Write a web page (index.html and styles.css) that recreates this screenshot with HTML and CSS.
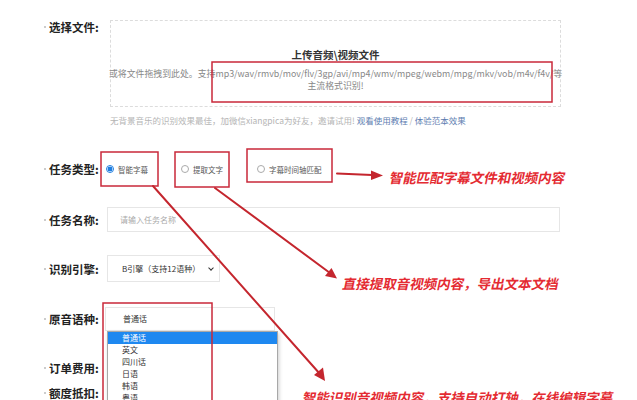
FILE: index.html
```html
<!DOCTYPE html>
<html lang="zh-CN">
  <head>
    <meta charset="utf-8">
    <title>上传音频视频文件</title>
    <link rel="stylesheet" href="styles.css">
  </head>
  <body>
    <div class="page">
      <div class="form">
        <div class="row row-file">
          <div class="label"><span class="dot"></span>选择文件:</div>
          <div class="field">
            <div class="upload">
              <div class="upload-title">上传音频\视频文件</div>
              <div class="upload-desc">或将文件拖拽到此处。支持mp3/wav/rmvb/mov/flv/3gp/avi/mp4/wmv/mpeg/webm/mpg/mkv/vob/m4v/f4v/等</div>
              <div class="upload-desc">主流格式识别!</div>
            </div>
            <div class="hint">无背景音乐的识别效果最佳，加微信xiangpica为好友，邀请试用! <a href="#">观看使用教程</a> / <a href="#">体验范本效果</a></div>
          </div>
        </div>

        <div class="row row-type">
          <div class="label"><span class="dot"></span>任务类型:</div>
          <div class="field radios">
            <label class="radio r1"><span class="circle checked"></span>智能字幕</label>
            <label class="radio r2"><span class="circle"></span>提取文字</label>
            <label class="radio r3"><span class="circle"></span>字幕时间轴匹配</label>
          </div>
        </div>

        <div class="row row-name">
          <div class="label"><span class="dot"></span>任务名称:</div>
          <div class="field">
            <div class="input">请输入任务名称</div>
          </div>
        </div>

        <div class="row row-engine">
          <div class="label"><span class="dot"></span>识别引擎:</div>
          <div class="field">
            <div class="select engine">B引擎（支持12语种）<span class="chev"></span></div>
          </div>
        </div>

        <div class="row row-lang">
          <div class="label"><span class="dot"></span>原音语种:</div>
          <div class="field">
            <div class="select lang">普通话</div>
          </div>
        </div>

        <div class="row row-fee">
          <div class="label"><span class="dot"></span>订单费用:</div>
        </div>

        <div class="row row-quota">
          <div class="label"><span class="dot"></span>额度抵扣:</div>
        </div>
      </div>

      <ul class="dropdown">
        <li class="active">普通话</li>
        <li>英文</li>
        <li>四川话</li>
        <li>日语</li>
        <li>韩语</li>
        <li>粤语</li>
      </ul>

      <svg class="marks" width="637" height="400" viewBox="0 0 637 400">
        <g fill="none" stroke="#c9283a" stroke-width="1.5">
          <rect x="212" y="62" width="340" height="40"/>
          <rect x="101" y="152" width="57" height="34"/>
          <rect x="175" y="152" width="54" height="35"/>
          <rect x="247" y="149" width="85" height="33"/>
          <rect x="103" y="303" width="109" height="110"/>
        </g>
        <g stroke="#c4262e" stroke-width="2" stroke-linecap="round">
          <line x1="337" y1="173.5" x2="372" y2="175"/>
          <line x1="153" y1="186" x2="320" y2="374"/>
          <line x1="215" y1="188" x2="330" y2="273"/>
        </g>
        <g fill="#c4262e">
          <polygon points="383,175.5 371,170.5 371,180"/>
          <polygon points="325,381 314,375 323,367.5"/>
          <polygon points="337,278.5 325,276 331.5,268"/>
        </g>
      </svg>

      <div class="note note-match">智能匹配字幕文件和视频内容</div>
      <div class="note note-text">直接提取音视频内容，导出文本文档</div>
      <div class="note note-smart">智能识别音视频内容，支持自动打轴，在线编辑字幕</div>
    </div>
  </body>
</html>
```

FILE: styles.css
```css
body {
  margin: 0;
  background: #fff;
  font-family: "Noto Sans CJK SC", "Noto Sans", sans-serif;
  color: #333;
  overflow: hidden;
}

.page {
  position: relative;
  width: 637px;
  height: 400px;
  overflow: hidden;
}

.form {
  display: flex;
  flex-direction: column;
  padding: 20px 0 0 44px;
}

.row {
  display: flex;
  align-items: flex-start;
}

.label {
  width: 63px;
  flex-shrink: 0;
  display: flex;
  align-items: center;
  font-size: 11.5px;
  font-weight: bold;
  color: #222;
  line-height: 14px;
  white-space: nowrap;
}

.dot {
  width: 2px;
  height: 2px;
  border-radius: 50%;
  background: #bbb;
  margin-right: 3px;
  flex-shrink: 0;
}

.field {
  flex: 1;
}

/* upload */
.row-file .field {
  margin-left: 3px;
}

.upload {
  width: 451px;
  height: 87px;
  box-sizing: border-box;
  border: 1px dashed #dcdcdc;
  text-align: center;
  display: flex;
  flex-direction: column;
  align-items: center;
  padding-top: 27px;
}

.upload-title {
  font-size: 10.5px;
  font-weight: bold;
  color: #333;
  line-height: 14px;
  margin-bottom: 6px;
}

.upload-desc {
  font-size: 8.9px;
  color: #888;
  line-height: 12px;
  white-space: nowrap;
}

.hint {
  margin-top: 7px;
  font-size: 8.5px;
  color: #b5b5b5;
  line-height: 12px;
  white-space: nowrap;
}

.hint a {
  color: #5d7db0;
  text-decoration: none;
}

/* task type */
.row-type {
  margin-top: 36px;
  height: 14px;
}

.radios {
  display: flex;
  align-items: center;
  height: 14px;
  font-size: 7.5px;
  color: #555;
}

.radio {
  display: flex;
  align-items: center;
  gap: 4px;
  white-space: nowrap;
}

.r1 {
  margin-left: -1px;
}

.r2 {
  margin-left: 33px;
}

.r3 {
  margin-left: 34px;
}

.circle {
  width: 6px;
  height: 6px;
  border: 1px solid #aaa;
  border-radius: 50%;
  box-sizing: content-box;
}

.circle.checked {
  border-color: #1f7ee0;
  background: radial-gradient(circle, #1f7ee0 55%, #fff 62%);
}

/* inputs */
.row-name {
  margin-top: 31px;
  align-items: center;
}

.input {
  width: 453px;
  height: 25px;
  box-sizing: border-box;
  border: 1px solid #e6e6e6;
  padding-left: 12px;
  font-size: 8px;
  line-height: 23px;
  color: #aaa;
}

.row-engine {
  margin-top: 23px;
  align-items: center;
}

.select {
  position: relative;
  box-sizing: border-box;
  border: 1px solid #e6e6e6;
  font-size: 8px;
  color: #333;
  padding-left: 14px;
}

.engine {
  width: 113px;
  height: 27px;
  line-height: 25px;
}

.chev {
  position: absolute;
  right: 6px;
  top: 10px;
  width: 3px;
  height: 3px;
  border-right: 1.3px solid #333;
  border-bottom: 1.3px solid #333;
  transform: rotate(45deg);
}

.row-lang {
  margin-top: 25px;
  align-items: center;
}

.lang {
  width: 170px;
  height: 24px;
  line-height: 22px;
  margin-left: -2px;
  padding-left: 17px;
}

.row-fee {
  margin-top: 30px;
}

.row-quota {
  margin-top: 11px;
}

/* open dropdown list */
.dropdown {
  position: absolute;
  left: 107px;
  top: 331px;
  width: 169px;
  margin: 0;
  padding: 0;
  list-style: none;
  background: #fff;
  border: 1px solid #a8a8a8;
  box-shadow: 1px 2px 4px rgba(0, 0, 0, 0.2);
  font-size: 8px;
  color: #333;
}

.dropdown li {
  height: 12px;
  line-height: 12px;
  padding-left: 14px;
}

.dropdown li.active {
  background: #1e88f0;
  color: #fff;
}

/* annotations */
.marks {
  position: absolute;
  left: 0;
  top: 0;
  pointer-events: none;
}

.note {
  position: absolute;
  font-size: 13.5px;
  font-weight: bold;
  color: #e42b32;
  white-space: nowrap;
  transform: skewX(-12deg);
  line-height: 18px;
}

.note-match {
  left: 390px;
  top: 168px;
}

.note-text {
  left: 343px;
  top: 274px;
}

.note-smart {
  left: 303px;
  top: 388px;
}
```
